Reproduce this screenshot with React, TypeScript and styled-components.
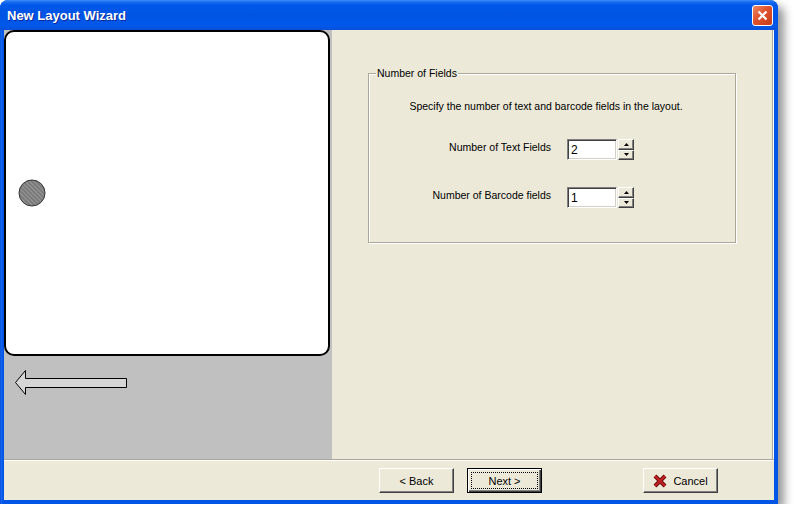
import styled, { createGlobalStyle } from 'styled-components'

const GlobalStyle = createGlobalStyle`
	html, body {
		margin: 0;
		padding: 0;
		background: #fff;
	}
	body {
		font-family: 'Liberation Sans', Arial, sans-serif;
		font-size: 10.5px;
		color: #000;
	}
`

const WindowStyled = styled.div`
	width: 778px;
	height: 504px;
	display: flex;
	flex-direction: column;
	background: #0055e5;
	border-radius: 8px 8px 0 0;
	box-shadow: 6px 6px 10px rgba(0, 0, 0, 0.42);
`
const TitleBar = styled.div`
	height: 30px;
	flex: none;
	display: flex;
	align-items: center;
	justify-content: space-between;
	padding: 0 5px 0 7px;
	border-radius: 8px 8px 0 0;
	background: linear-gradient(
		to bottom,
		#3d8ef9 0,
		#1a6cf0 2px,
		#0058ea 5px,
		#0054e3 50%,
		#0058ea 85%,
		#0a4fd8 100%
	);
`
const Title = styled.span`
	color: #fff;
	font-weight: bold;
	font-size: 13px;
	text-shadow: 1px 1px #0b2b9c;
	padding-top: 1px;
`
const CloseButton = styled.div`
	width: 21px;
	height: 21px;
	box-sizing: border-box;
	border: 1px solid #fff;
	border-radius: 3px;
	background: linear-gradient(135deg, #ee8a66 0%, #e0522d 45%, #c63d17 100%);
	display: flex;
	align-items: center;
	justify-content: center;
`
const Frame = styled.div`
	flex: 1;
	display: flex;
	padding: 0 4px 4px;
	background: linear-gradient(to right, #0841d8 0, #166aee 1px, #0055e5 3px);
`
const Body = styled.div`
	flex: 1;
	display: flex;
	flex-direction: column;
	background: #ece9d8;
`
const Main = styled.div`
	height: 430px;
	box-sizing: border-box;
	display: flex;
	border-bottom: 1px solid #aca899;
`
const Preview = styled.div`
	width: 328px;
	flex: none;
	background: #c0c0c0;
	display: flex;
	flex-direction: column;
`
const LabelCard = styled.div`
	width: 326px;
	height: 326px;
	box-sizing: border-box;
	border: 2px solid #000;
	border-radius: 10px;
	background: #fff;
	display: flex;
	align-items: center;
	padding-left: 12px;
`
const ArrowIcon = styled.svg`
	display: block;
	margin: 13px 0 0 10px;
`
const Content = styled.div`
	flex: 1;
	padding: 37px 0 0 36px;
	box-shadow: inset -1px 0 #fff, inset -2px 0 #aca899;
`
const GroupBox = styled.fieldset`
	width: 368px;
	box-sizing: border-box;
	margin: 0;
	padding: 0 0 34px;
	border: 1px solid #aca899;
	box-shadow: inset 1px 1px #fff, 1px 1px #fff;
`
const Legend = styled.legend`
	margin-left: 7px;
	padding: 0 1px;
	line-height: 12px;
	background: #ece9d8;
`
const Description = styled.div`
	margin-top: 21px;
	line-height: 12px;
	text-align: center;
	padding-right: 12px;
`
const FieldGrid = styled.div`
	display: grid;
	grid-template-columns: 182px auto;
	column-gap: 16px;
	row-gap: 27px;
	margin-top: 27px;
`
const FieldLabel = styled.label`
	text-align: right;
	line-height: 12px;
	padding-top: 2px;
`
const SpinField = styled.div`
	display: flex;
	align-items: stretch;
	gap: 1px;
	height: 21px;
`
const NumberInput = styled.input`
	width: 50px;
	height: 21px;
	box-sizing: border-box;
	margin: 0;
	padding: 1px 3px 0;
	font-family: 'Liberation Sans', Arial, sans-serif;
	font-size: 12px;
	color: #000;
	background: #fff;
	border: 1px solid;
	border-color: #808080 #fff #fff #808080;
	box-shadow: inset 1px 1px #404040, inset -1px -1px #d4d0c8;
	outline: none;
`
const Spinner = styled.div`
	width: 16px;
	display: flex;
	flex-direction: column;
`
const SpinButton = styled.div`
	flex: 1;
	box-sizing: border-box;
	display: flex;
	align-items: center;
	justify-content: center;
	background: #ece9d8;
	border: 1px solid;
	border-color: #fff #404040 #404040 #fff;
	box-shadow: inset -1px -1px #808080;
`
const Footer = styled.div`
	flex: 1;
	display: flex;
	align-items: flex-start;
	gap: 13px;
	padding: 7px 0 0 375px;
	border-top: 1px solid #fff;
`
const Button = styled.button<{ $default?: boolean; $push?: number }>`
	width: 75px;
	height: 25px;
	box-sizing: border-box;
	margin: 0 0 0 ${(p) => p.$push || 0}px;
	padding: 0;
	display: flex;
	align-items: center;
	justify-content: center;
	gap: 6px;
	font-family: 'Liberation Sans', Arial, sans-serif;
	font-size: 11px;
	color: #000;
	background: #ece9d8;
	border: 1px solid;
	border-color: ${(p) => (p.$default ? '#000' : '#fff #404040 #404040 #fff')};
	box-shadow: ${(p) =>
		p.$default
			? 'inset 1px 1px #fff, inset -1px -1px #404040, inset -2px -2px #808080'
			: 'inset -1px -1px #808080'};
	outline: ${(p) => (p.$default ? '1px dotted #000' : 'none')};
	outline-offset: -5px;
`

const SpinArrow = ({ up }: { up?: boolean }) => (
	<svg width='5' height='3' viewBox='0 0 5 3'>
		<polygon points={up ? '2.5,0 5,3 0,3' : '0,0 5,0 2.5,3'} fill='#000' />
	</svg>
)

const Field = ({ label, value }: { label: string; value: string }) => (
	<>
		<FieldLabel>{label}</FieldLabel>
		<SpinField>
			<NumberInput readOnly value={value} />
			<Spinner>
				<SpinButton>
					<SpinArrow up />
				</SpinButton>
				<SpinButton>
					<SpinArrow />
				</SpinButton>
			</Spinner>
		</SpinField>
	</>
)

const App = () => {
	return (
		<>
			<GlobalStyle />
			<WindowStyled>
				<TitleBar>
					<Title>New Layout Wizard</Title>
					<CloseButton>
						<svg width='11' height='11' viewBox='0 0 11 11'>
							<path d='M1.5 1.5L9.5 9.5M9.5 1.5L1.5 9.5' stroke='#fff' strokeWidth='2.2' />
						</svg>
					</CloseButton>
				</TitleBar>
				<Frame>
					<Body>
						<Main>
							<Preview>
								<LabelCard>
									<svg width='28' height='28' viewBox='0 0 28 28'>
										<defs>
											<pattern
												id='hatch'
												width='3'
												height='3'
												patternUnits='userSpaceOnUse'
												patternTransform='rotate(-45)'>
												<rect width='3' height='3' fill='#7a7a7a' />
												<line x1='0' y1='0' x2='0' y2='3' stroke='#b4b4b4' strokeWidth='1' />
											</pattern>
										</defs>
										<circle cx='14' cy='14' r='13' fill='url(#hatch)' stroke='#333' strokeWidth='1' />
									</svg>
								</LabelCard>
								<ArrowIcon width='114' height='27' viewBox='0 0 114 27'>
									<polygon
										points='1.5,13.5 11.5,1.5 11.5,9.5 112.5,9.5 112.5,18.5 11.5,18.5 11.5,25.5'
										fill='#d6d6d6'
										stroke='#000'
										strokeWidth='1'
									/>
								</ArrowIcon>
							</Preview>
							<Content>
								<GroupBox>
									<Legend>Number of Fields</Legend>
									<Description>
										Specify the number of text and barcode fields in the layout.
									</Description>
									<FieldGrid>
										<Field label='Number of Text Fields' value='2' />
										<Field label='Number of Barcode fields' value='1' />
									</FieldGrid>
								</GroupBox>
							</Content>
						</Main>
						<Footer>
							<Button>&lt; Back</Button>
							<Button $default>Next &gt;</Button>
							<Button $push={88}>
								<svg width='14' height='14' viewBox='0 0 14 14'>
									<path d='M2 2L12 12M12 2L2 12' stroke='#6e0b0b' strokeWidth='4' />
									<path d='M2 2L12 12M12 2L2 12' stroke='#c42424' strokeWidth='2' />
								</svg>
								Cancel
							</Button>
						</Footer>
					</Body>
				</Frame>
			</WindowStyled>
		</>
	)
}

export default App
